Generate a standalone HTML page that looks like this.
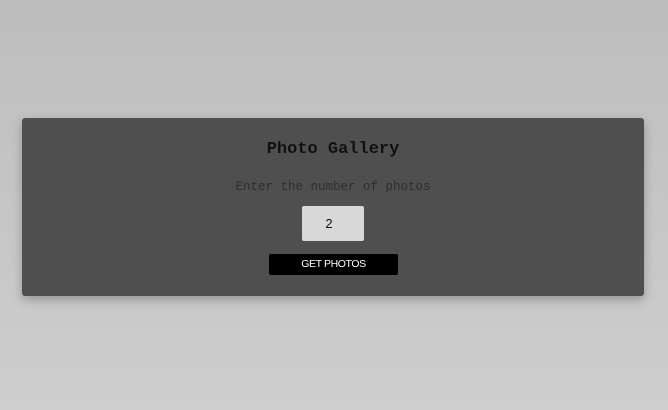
<!DOCTYPE html>
<html><head><style>
html,body{margin:0;width:668px;height:410px;overflow:hidden}
body{background:linear-gradient(#bdbdbd,#cecece);position:relative;font-family:"Liberation Mono",monospace}
.card{position:absolute;left:22px;top:118px;width:622px;height:178px;background:#4f4f4f;border-radius:3px;box-shadow:0 4px 10px rgba(0,0,0,.25)}
.t{position:absolute;left:0;width:100%;text-align:center;top:22px;font-size:17px;font-weight:bold;color:#111}
.s{position:absolute;left:0;width:100%;text-align:center;top:62px;font-size:12.5px;color:#2e2e2e}
.in{position:absolute;left:280px;top:88px;width:54px;padding-right:8px;height:35px;background:#d8d8d8;border-radius:2px;text-align:center;line-height:35px;font-size:13px;font-family:"Liberation Sans",sans-serif;color:#111}
.b{position:absolute;left:247px;top:136px;width:129px;height:21px;background:#000;border-radius:2px;color:#fff;text-align:center;line-height:21px;font-size:10.5px;font-family:"Liberation Sans",sans-serif;letter-spacing:-0.4px}
</style></head><body>
<div class="card">
<div class="t">Photo Gallery</div>
<div class="s">Enter the number of photos</div>
<div class="in">2</div>
<div class="b">GET PHOTOS</div>
</div>
</body></html>
